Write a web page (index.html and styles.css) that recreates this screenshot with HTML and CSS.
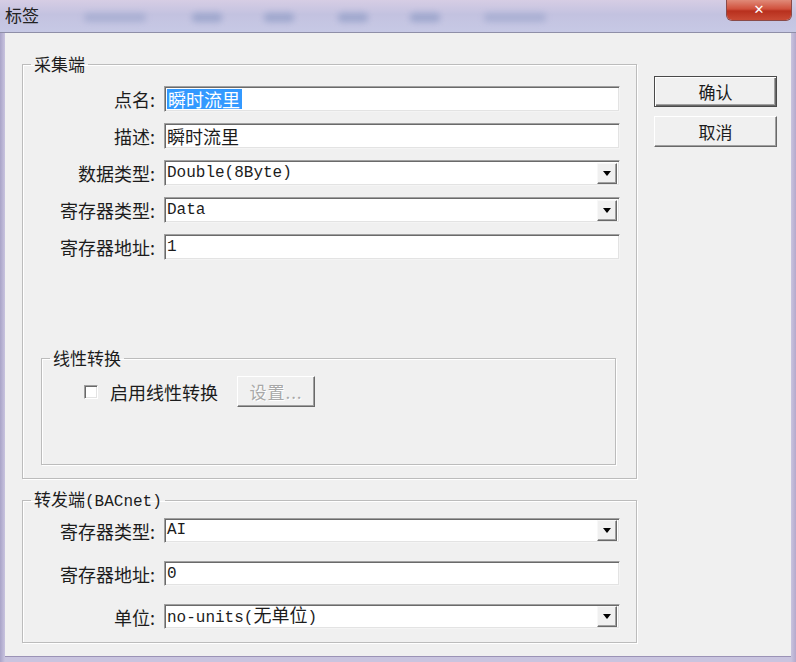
FILE: index.html
```html
<!DOCTYPE html>
<html lang="zh-CN">
<head>
    <meta charset="UTF-8">
    <title>标签</title>
    <link rel="stylesheet" href="styles.css">
</head>
<body>
    <div class="window">
        <div class="titlebar">
            <span class="title">标签</span>
            <div class="ghosts">
                <span class="ghost g1"></span>
                <span class="ghost g2"></span>
                <span class="ghost g3"></span>
                <span class="ghost g4"></span>
                <span class="ghost g5"></span>
                <span class="ghost g6"></span>
            </div>
            <div class="close">&#x2715;</div>
        </div>

        <div class="client">
            <div class="main">
                <fieldset class="group group-top">
                    <legend>采集端</legend>
                    <div class="form">
                        <label>点名:</label>
                        <div class="edit"><span class="val cjk selected">瞬时流里</span></div>

                        <label>描述:</label>
                        <div class="edit"><span class="val cjk">瞬时流里</span></div>

                        <label>数据类型:</label>
                        <div class="edit combo"><span class="val">Double(8Byte)</span><span class="drop"><i></i></span></div>

                        <label>寄存器类型:</label>
                        <div class="edit combo"><span class="val">Data</span><span class="drop"><i></i></span></div>

                        <label>寄存器地址:</label>
                        <div class="edit"><span class="val">1</span></div>
                    </div>

                    <fieldset class="group group-linear">
                        <legend>线性转换</legend>
                        <div class="linear-row">
                            <span class="checkbox"></span>
                            <span class="check-label">启用线性转换</span>
                            <span class="btn disabled">设置...</span>
                        </div>
                    </fieldset>
                </fieldset>

                <fieldset class="group group-bottom">
                    <legend>转发端<span class="latin">(BACnet)</span></legend>
                    <div class="form form-bottom">
                        <label>寄存器类型:</label>
                        <div class="edit combo"><span class="val">AI</span><span class="drop"><i></i></span></div>

                        <label>寄存器地址:</label>
                        <div class="edit"><span class="val">0</span></div>

                        <label>单位:</label>
                        <div class="edit combo"><span class="val">no-units(<span class="cjk">无单位</span>)</span><span class="drop"><i></i></span></div>
                    </div>
                </fieldset>
            </div>

            <div class="side">
                <span class="btn default">确认</span>
                <span class="btn">取消</span>
            </div>
        </div>
    </div>
</body>
</html>
```

FILE: styles.css
```css
html, body {
    margin: 0;
    padding: 0;
}
body {
    width: 796px;
    height: 662px;
    overflow: hidden;
    background: #b9b3d2;
    font-family: "Noto Sans CJK SC", "Noto Sans", sans-serif;
    color: #1c1c1c;
}
.window {
    height: 662px;
    display: flex;
    flex-direction: column;
    background: linear-gradient(90deg, #a9a4c8 0, #c9c4df 5px, #c9c4df 791px, #b4a9cc 796px);
}
.titlebar {
    height: 32px;
    display: flex;
    align-items: flex-start;
    background: linear-gradient(180deg, #d6cde4 0, #c3c2e0 45%, #c7c9e5 100%);
    border-bottom: 1px solid #8f8fa8;
    position: relative;
}
.title {
    font-size: 17px;
    line-height: 18px;
    margin: 6px 0 0 5px;
    color: #222;
}
.ghosts {
    display: flex;
    margin: 13px 0 0 45px;
}
.ghost {
    height: 9px;
    border-radius: 4px;
    background: #95a0c8;
    filter: blur(3px);
    opacity: 0.8;
}
.g1 { width: 62px; opacity: 0.55; }
.g2 { width: 30px; margin-left: 46px; }
.g3 { width: 30px; margin-left: 42px; }
.g4 { width: 30px; margin-left: 44px; }
.g5 { width: 30px; margin-left: 42px; }
.g6 { width: 62px; margin-left: 44px; opacity: 0.55; }
.close {
    position: absolute;
    top: 0;
    left: 727px;
    width: 64px;
    height: 20px;
    border-radius: 0 0 5px 5px;
    background: linear-gradient(180deg, #e08a78 0, #d0503c 45%, #b8301e 55%, #c94a34 100%);
    box-shadow: 0 0 0 1px #8a4a48;
    color: #fff;
    font-family: "DejaVu Sans", sans-serif;
    font-weight: bold;
    font-size: 13px;
    line-height: 20px;
    text-align: center;
}
.client {
    flex: 1;
    margin: 0 5px 5px 5px;
    background: #f0f0f0;
    display: flex;
    border-bottom: 1px solid #9b93b6;
}
.main {
    width: 615px;
    margin-left: 17px;
    padding-top: 21px;
}
.group {
    margin: 0;
    padding: 0;
    border: 1px solid #bcbcbc;
    box-shadow: inset 1px 1px 0 #fff, 1px 1px 0 #fff;
    min-width: 0;
}
.group legend {
    font-size: 17px;
    line-height: 20px;
    padding: 0 3px;
    margin-left: 8px;
}
.latin {
    font-family: "Liberation Mono", monospace;
    font-size: 16px;
}
.group-top {
    height: 425px;
    box-sizing: border-box;
}
.form {
    display: grid;
    grid-template-columns: 132px 456px;
    column-gap: 9px;
    row-gap: 11px;
    margin-top: 12px;
}
.form label {
    text-align: right;
    font-size: 18px;
    line-height: 26px;
}
.edit {
    height: 26px;
    box-sizing: border-box;
    background: #fff;
    border: 1px solid;
    border-color: #a0a0a0 #f4f4f4 #f4f4f4 #a0a0a0;
    box-shadow: inset 1px 1px 0 #6a6a6a, inset -1px -1px 0 #e3e3e3;
    display: flex;
    align-items: center;
    padding-left: 2px;
}
.val {
    font-family: "Liberation Mono", monospace;
    font-size: 16px;
    line-height: 20px;
    white-space: nowrap;
    flex: 1;
}
.cjk {
    font-family: "Noto Sans CJK SC", sans-serif;
    font-size: 18px;
}
.selected {
    flex: none;
    background: #3399ff;
    color: #fff;
    padding: 0 2px 0 1px;
}
.combo {
    padding-right: 2px;
    align-items: flex-end;
    padding-bottom: 1px;
}
.combo .val {
    align-self: center;
}
.drop {
    width: 20px;
    height: 21px;
    box-sizing: border-box;
    background: #f0f0f0;
    border: 1px solid;
    border-color: #f8f8f8 #696969 #696969 #f8f8f8;
    box-shadow: inset -1px -1px 0 #a0a0a0;
    display: flex;
    align-items: center;
    justify-content: center;
}
.drop i {
    width: 0;
    height: 0;
    border-left: 4px solid transparent;
    border-right: 4px solid transparent;
    border-top: 5px solid #000;
}
.group-linear {
    width: 575px;
    height: 117px;
    box-sizing: border-box;
    margin: 88px 0 0 18px;
}
.linear-row {
    display: flex;
    align-items: center;
    padding: 8px 0 0 42px;
}
.checkbox {
    width: 14px;
    height: 14px;
    box-sizing: border-box;
    background: #fff;
    border: 1px solid;
    border-color: #a0a0a0 #fff #fff #a0a0a0;
    box-shadow: inset 1px 1px 0 #696969, inset -1px -1px 0 #e3e3e3;
}
.check-label {
    font-size: 18px;
    margin-left: 12px;
}
.btn {
    display: flex;
    align-items: center;
    justify-content: center;
    box-sizing: border-box;
    background: #f0f0f0;
    border: 1px solid;
    border-color: #fff #696969 #696969 #fff;
    box-shadow: inset -1px -1px 0 #a0a0a0;
    font-size: 17px;
}
.btn.disabled {
    width: 78px;
    height: 31px;
    margin-left: 19px;
    color: #a8a8a8;
    text-shadow: 1px 1px 0 #fff;
    letter-spacing: 1px;
}
.group-bottom {
    height: 154px;
    box-sizing: border-box;
    margin-top: 10px;
}
.form-bottom {
    margin-top: 6px;
    row-gap: 17px;
}
.form-bottom .edit {
    height: 25px;
}
.side {
    display: flex;
    flex-direction: column;
    gap: 9px;
    margin: 43px 0 0 17px;
}
.side .btn {
    width: 123px;
    height: 31px;
}
.btn.default {
    border: 1px solid #4a4a4a;
    box-shadow: inset 1px 1px 0 #fff, inset -1px -1px 0 #696969, inset -2px -2px 0 #a0a0a0;
}
```
